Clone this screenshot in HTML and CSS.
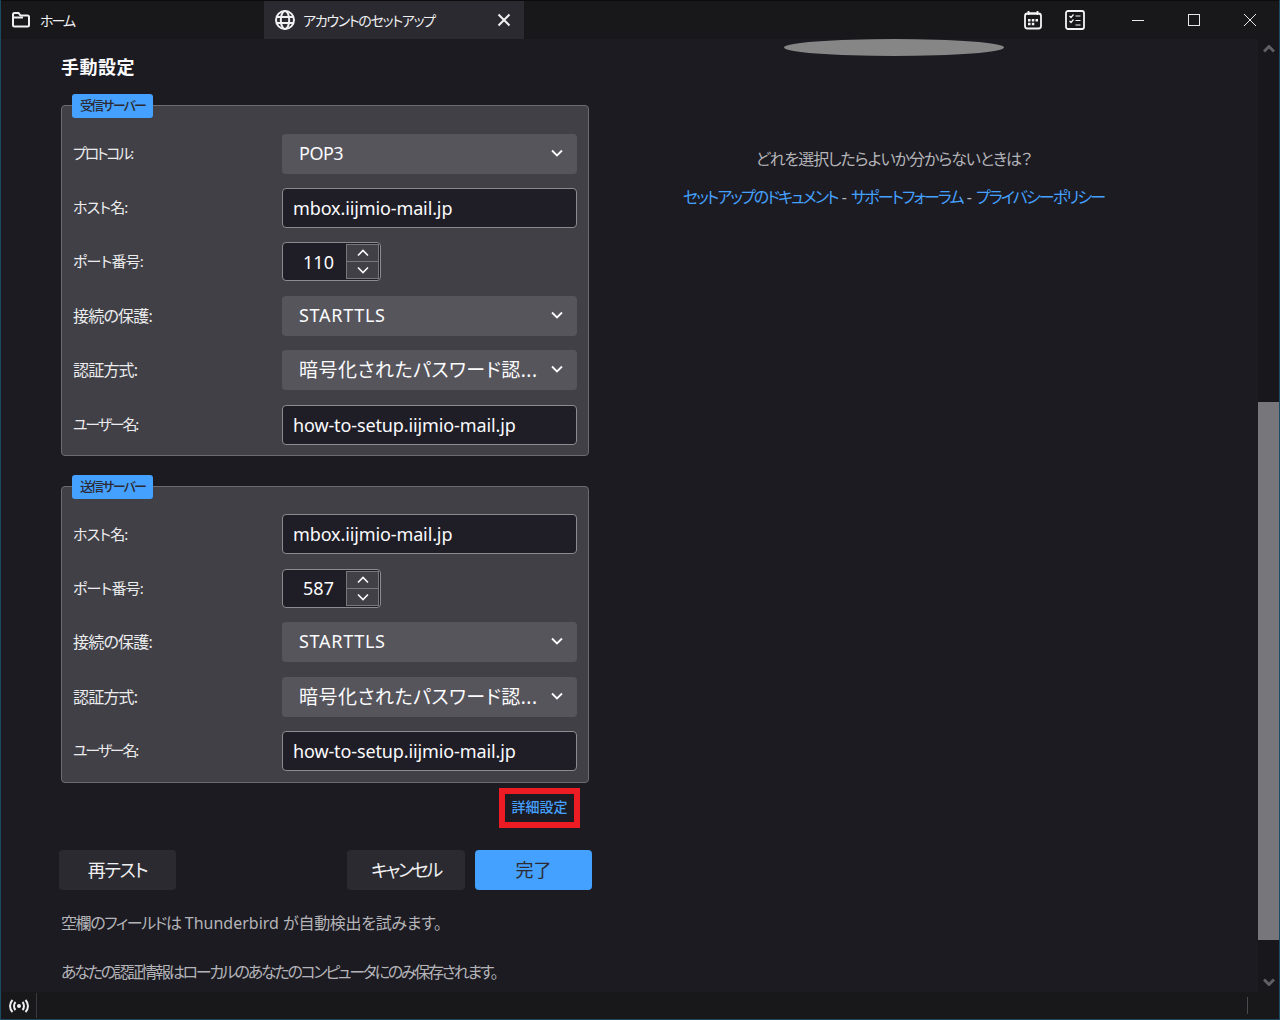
FILE: index.html
```html
<!DOCTYPE html>
<html lang="ja">
<head>
    <title>アカウントのセットアップ</title>
    <link rel="stylesheet" href="styles.css">
</head>
<body>
    <div class="titlebar">
        <div class="tab home-tab">
            <svg class="tab-icon" viewBox="0 0 20 20"><path d="M2 4.500a1.500 1.500 0 0 1 1.500-1.500h4l2 2.500h7a1.500 1.500 0 0 1 1.500 1.500v8a1.500 1.500 0 0 1-1.500 1.500h-13a1.500 1.500 0 0 1-1.500-1.500z"/><path d="M2 7.500h10"/></svg>
            <span>ホーム</span>
        </div>
        <div class="tab active-tab">
            <svg class="tab-icon" viewBox="0 0 20 20"><circle cx="10" cy="10" r="9"/><ellipse cx="10" cy="10" rx="4.200" ry="9"/><path d="M1.500 7h17M1.500 13h17"/></svg>
            <span class="tab-title">アカウントのセットアップ</span>
            <svg class="tab-close" viewBox="0 0 14 14"><path d="M1.500 1.500l11 11M12.500 1.500l-11 11"/></svg>
        </div>
        <div class="title-tools">
            <svg class="tool-icon" viewBox="0 0 20 20"><rect x="2" y="3.500" width="16" height="15" rx="2.500"/><path d="M5.500 1v4M14.500 1v4M6 3.500h8"/><path class="dots" d="M5 9h2.500v2.500H5zM8.800 9h2.500v2.500H8.800zM12.500 9H15v2.500h-2.500zM5 12.800h2.500v2.500H5zM8.800 12.800h2.500v2.500H8.800z"/></svg>
            <svg class="tool-icon" viewBox="0 0 20 20"><rect x="1" y="1" width="18" height="18" rx="2"/><path class="thin" d="M4.500 6l1.500 1.500 2.500-3M4.500 11l1.500 1.500 2.500-3M10.500 6h5M10.500 10.500h5M10.500 15h5"/></svg>
        </div>
        <div class="window-buttons">
            <svg class="win-icon" viewBox="0 0 12 12"><path d="M0 6.500h12"/></svg>
            <svg class="win-icon" viewBox="0 0 12 12"><rect x="0.500" y="0.500" width="11" height="11"/></svg>
            <svg class="win-icon" viewBox="0 0 12 12"><path d="M0 0l12 12M12 0L0 12"/></svg>
        </div>
    </div>

    <div class="main">
        <div class="content">
            <div class="left-col">
                <h1 class="heading">手動設定</h1>

                <div class="server-box incoming">
                    <div class="badge">受信サーバー</div>
                    <div class="row"><label class="kana">プロトコル:</label><div class="select">POP3<svg class="chevron" viewBox="0 0 12 8"><path d="M1 1.500l5 5 5-5"/></svg></div></div>
                    <div class="row"><label class="mixed">ホスト名:</label><div class="input">mbox.iijmio-mail.jp</div></div>
                    <div class="row"><label class="mixed">ポート番号:</label><div class="number"><span class="number-value">110</span><div class="spin"><div class="spin-btn"><svg viewBox="0 0 12 8"><path d="M1 6.500l5-5 5 5"/></svg></div><div class="spin-btn"><svg viewBox="0 0 12 8"><path d="M1 1.500l5 5 5-5"/></svg></div></div></div></div>
                    <div class="row"><label>接続の保護:</label><div class="select"><span class="wide">STARTTLS</span><svg class="chevron" viewBox="0 0 12 8"><path d="M1 1.500l5 5 5-5"/></svg></div></div>
                    <div class="row"><label>認証方式:</label><div class="select"><span class="clip">暗号化されたパスワード認...</span><svg class="chevron" viewBox="0 0 12 8"><path d="M1 1.500l5 5 5-5"/></svg></div></div>
                    <div class="row"><label class="kana">ユーザー名:</label><div class="input">how-to-setup.iijmio-mail.jp</div></div>
                </div>

                <div class="server-box outgoing">
                    <div class="badge">送信サーバー</div>
                    <div class="row"><label class="mixed">ホスト名:</label><div class="input">mbox.iijmio-mail.jp</div></div>
                    <div class="row"><label class="mixed">ポート番号:</label><div class="number"><span class="number-value">587</span><div class="spin"><div class="spin-btn"><svg viewBox="0 0 12 8"><path d="M1 6.500l5-5 5 5"/></svg></div><div class="spin-btn"><svg viewBox="0 0 12 8"><path d="M1 1.500l5 5 5-5"/></svg></div></div></div></div>
                    <div class="row"><label>接続の保護:</label><div class="select"><span class="wide">STARTTLS</span><svg class="chevron" viewBox="0 0 12 8"><path d="M1 1.500l5 5 5-5"/></svg></div></div>
                    <div class="row"><label>認証方式:</label><div class="select"><span class="clip">暗号化されたパスワード認...</span><svg class="chevron" viewBox="0 0 12 8"><path d="M1 1.500l5 5 5-5"/></svg></div></div>
                    <div class="row"><label class="kana">ユーザー名:</label><div class="input">how-to-setup.iijmio-mail.jp</div></div>
                </div>

                <div class="advanced-row"><a class="advanced-link">詳細設定</a></div>

                <div class="buttons">
                    <button class="btn retest">再テスト</button>
                    <div class="buttons-right">
                        <button class="btn cancel">キャンセル</button>
                        <button class="btn primary">完了</button>
                    </div>
                </div>

                <p class="note first-note"><span class="note-kana">空欄のフィールドは</span> Thunderbird <span class="note-tail">が自動検出を試みます。</span></p>
                <p class="note note-kana">あなたの認証情報はローカルのあなたのコンピュータにのみ保存されます。</p>
            </div>

            <div class="right-col">
                <div class="oval"></div>
                <p class="help-text">どれを選択したらよいか分からないときは？</p>
                <p class="help-links"><a>セットアップのドキュメント</a> - <a>サポートフォーラム</a> - <a>プライバシーポリシー</a></p>
            </div>
        </div>

        <div class="scrollbar">
            <svg class="scroll-arrow up" viewBox="0 0 12 8"><path d="M1 6.500l5-5 5 5"/></svg>
            <div class="scroll-thumb"></div>
            <svg class="scroll-arrow down" viewBox="0 0 12 8"><path d="M1 1.500l5 5 5-5"/></svg>
        </div>
    </div>

    <div class="statusbar">
        <div class="status-left">
            <svg class="status-icon" viewBox="0 0 20 14"><circle cx="10" cy="7" r="2" class="dot"/><path d="M6.500 3c-2 2.200-2 5.800 0 8M13.500 3c2 2.200 2 5.800 0 8M3.500 1c-3.300 3.500-3.300 8.500 0 12M16.500 1c3.300 3.500 3.300 8.500 0 12"/></svg>
        </div>
        <div class="status-end"></div>
    </div>
</body>
</html>
```

FILE: styles.css
```css
* {
    box-sizing: border-box;
}
html, body {
    height: 100%;
}
body {
    margin: 0;
    width: 1280px;
    height: 1020px;
    overflow: hidden;
    display: flex;
    flex-direction: column;
    background-color: #1c1b22;
    color: #fbfbfe;
    font-family: "Noto Sans", "Noto Sans CJK JP", sans-serif;
    font-feature-settings: "palt";
    border-left: 1px solid #1d4a63;
    border-right: 1px solid #1d4a63;
}
svg {
    fill: none;
    stroke: currentColor;
    display: block;
}

/* title bar */
.titlebar {
    height: 39px;
    flex: none;
    display: flex;
    background-color: #18181a;
    border-top: 1px solid #0c0c0d;
    padding-left: 1px;
}
.tab {
    display: flex;
    align-items: center;
    font-size: 14px;
    color: #f0f0f2;
    white-space: nowrap;
}
.home-tab {
    width: 262px;
    padding-left: 9px;
    gap: 9px;
    letter-spacing: -2px;
}
.active-tab {
    width: 260px;
    padding-left: 11px;
    gap: 8px;
    background-color: #2b2a30;
}
.tab-icon {
    width: 20px;
    height: 20px;
    stroke-width: 2;
}
.tab-title {
    flex: 1;
    letter-spacing: -1.3px;
}
.tab-close {
    width: 14px;
    height: 14px;
    stroke-width: 2;
    margin-right: 13px;
}
.title-tools {
    display: flex;
    align-items: center;
    gap: 22px;
    margin-left: 499px;
    color: #f4f4f4;
}
.tool-icon {
    width: 20px;
    height: 20px;
    stroke-width: 1.8;
}
.tool-icon .dots {
    fill: currentColor;
    stroke: none;
}
.tool-icon .thin {
    stroke-width: 1.2;
}
.window-buttons {
    display: flex;
    align-items: center;
    gap: 44px;
    margin-left: 47px;
    color: #e8e8e8;
}
.win-icon {
    width: 12px;
    height: 12px;
    stroke-width: 1;
}

/* main area */
.main {
    flex: 1;
    display: flex;
    min-height: 0;
}
.content {
    flex: 1;
    display: flex;
    min-width: 0;
}
.left-col {
    width: 592px;
    padding-left: 60px;
    flex: none;
}
.heading {
    margin: 16px 0 0;
    font-size: 18px;
    line-height: 24px;
    font-weight: 700;
    letter-spacing: 0.5px;
}
.server-box {
    position: relative;
    width: 528px;
    background-color: #404046;
    border: 1px solid #6b6b70;
    border-radius: 4px;
}
.incoming {
    margin-top: 26px;
    height: 351px;
    padding: 27.6px 11px 0;
}
.outgoing {
    margin-top: 30px;
    height: 297px;
    padding: 27.4px 11px 0;
}
.badge {
    position: absolute;
    left: 10px;
    top: -12px;
    width: 81px;
    height: 24px;
    background-color: #45a1ff;
    border-radius: 3px;
    color: #2b2a33;
    font-size: 13px;
    font-weight: 500;
    letter-spacing: -1.8px;
    line-height: 23px;
    text-align: center;
}
.row {
    display: flex;
    align-items: center;
    margin-bottom: 14.4px;
}
label {
    width: 209px;
    flex: none;
    padding-bottom: 2px;
    font-size: 16px;
    letter-spacing: -0.8px;
    color: #ececee;
}
label.kana {
    font-size: 15px;
    letter-spacing: -2.2px;
}
label.mixed {
    font-size: 15px;
    letter-spacing: -0.8px;
}
.select {
    width: 295px;
    height: 40px;
    display: flex;
    align-items: center;
    justify-content: space-between;
    padding: 0 14px 2px 17px;
    background-color: #56555c;
    border-radius: 4px;
    font-size: 18px;
    letter-spacing: -0.5px;
}
.wide {
    letter-spacing: 0.7px;
}
.clip {
    font-size: 19px;
    letter-spacing: 0.5px;
}
.chevron {
    width: 12px;
    height: 8px;
    stroke-width: 1.8;
}
.input {
    width: 295px;
    height: 40px;
    padding: 0 10px;
    line-height: 38px;
    background-color: #1f1e26;
    border: 1px solid #8b8b90;
    border-radius: 4px;
    font-size: 18px;
    letter-spacing: -0.12px;
}
.number {
    width: 99px;
    height: 39px;
    display: flex;
    align-items: center;
    background-color: #1f1e26;
    border: 1px solid #8b8b90;
    border-radius: 4px;
    font-size: 18px;
}
.number-value {
    width: 63px;
    text-align: center;
    padding-left: 8px;
}
.spin {
    width: 33px;
    height: 35px;
    display: flex;
    flex-direction: column;
    background-color: #404046;
    border: 1px solid #77777c;
}
.spin-btn {
    flex: 1;
    display: flex;
    align-items: center;
    justify-content: center;
}
.spin-btn + .spin-btn {
    border-top: 1px solid #77777c;
}
.spin-btn svg {
    width: 12px;
    height: 8px;
    stroke-width: 1.6;
}
.advanced-row {
    display: flex;
    justify-content: flex-end;
    width: 519px;
    margin-top: 5px;
}
.advanced-link {
    width: 81px;
    height: 40px;
    border: 6px solid #ed1c24;
    color: #45a1ff;
    font-size: 14px;
    font-weight: 500;
    line-height: 26px;
    text-align: center;
    white-space: nowrap;
    background-color: #1c1b22;
}
.buttons {
    display: flex;
    justify-content: space-between;
    width: 533px;
    margin: 22px 0 0 -2px;
}
.buttons-right {
    display: flex;
    gap: 10px;
}
.btn {
    width: 118px;
    height: 40px;
    padding: 0 0 2px;
    border: none;
    border-radius: 4px;
    background-color: #2b2a30;
    color: #f0f0f2;
    font-family: inherit;
    font-feature-settings: inherit;
    font-size: 18px;
}
.retest {
    width: 117px;
    letter-spacing: -1.2px;
}
.cancel {
    letter-spacing: -2.4px;
}
.primary {
    width: 117px;
    background-color: #45a1ff;
    color: #2b2a33;
}
.note {
    margin: 0;
    font-size: 16px;
    line-height: 24px;
    color: #b4b4b8;
    white-space: nowrap;
}
.first-note {
    margin: 21px 0 25px;
}
.note-kana {
    letter-spacing: -2.27px;
}
.first-note .note-kana {
    letter-spacing: -1.4px;
}
.note-tail {
    letter-spacing: -0.3px;
}

/* right side */
.right-col {
    flex: 1;
    display: flex;
    flex-direction: column;
    align-items: center;
    padding-right: 64px;
}
.oval {
    width: 220px;
    height: 17px;
    border-radius: 50%;
    background-color: #868686;
}
.help-text {
    margin: 91px 0 0;
    font-size: 16px;
    line-height: 24px;
    letter-spacing: -1.05px;
    color: #b4b4b8;
}
.help-links {
    margin: 14px 0 0;
    font-size: 16px;
    line-height: 24px;
    color: #b4b4b8;
    white-space: nowrap;
}
.help-links a {
    color: #45a1ff;
    letter-spacing: -1.9px;
}

/* scrollbar */
.scrollbar {
    width: 21px;
    flex: none;
    display: flex;
    flex-direction: column;
    align-items: center;
    background-color: #18181c;
    color: #5f5f64;
}
.scroll-arrow {
    width: 12px;
    height: 8px;
    stroke-width: 3;
}
.up {
    margin-top: 6px;
}
.scroll-thumb {
    width: 21px;
    height: 538px;
    margin-top: 349px;
    background-color: #77767b;
}
.down {
    margin-top: 38px;
}

/* status bar */
.statusbar {
    height: 28px;
    flex: none;
    display: flex;
    justify-content: space-between;
    background-color: #18181a;
    border-bottom: 1px solid #1d4a63;
}
.status-left {
    width: 36px;
    display: flex;
    align-items: center;
    justify-content: center;
    border-right: 1px solid #3a3a3e;
    margin: 1px 0;
}
.status-icon {
    width: 20px;
    height: 14px;
    stroke-width: 2;
    color: #f0f0f2;
}
.status-icon .dot {
    fill: currentColor;
    stroke: none;
}
.status-end {
    width: 32px;
    border-left: 1px solid #4a4a4e;
    margin: 5px 0;
}
```
